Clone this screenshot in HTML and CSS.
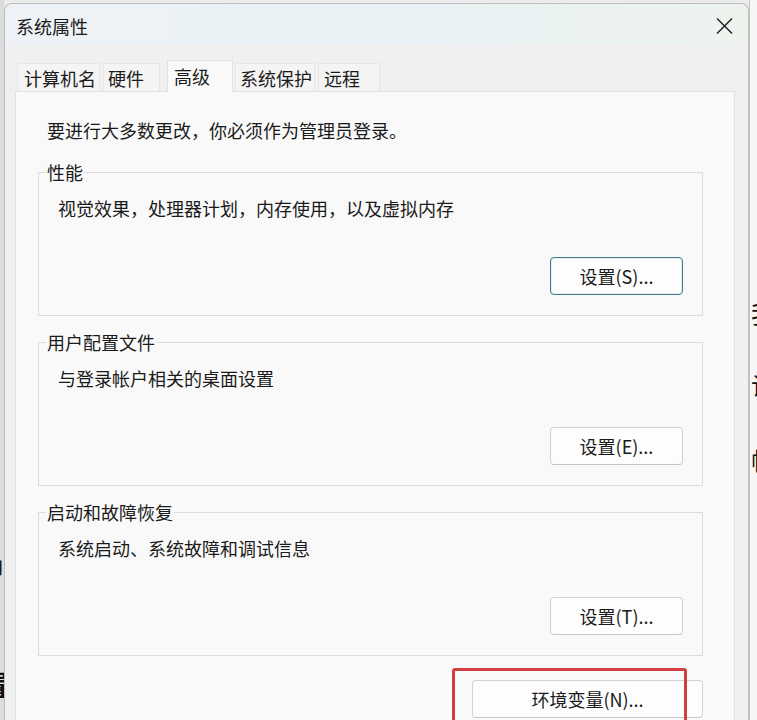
FILE: index.html
```html
<!DOCTYPE html>
<html lang="zh-CN">
<head>
<meta charset="utf-8">
<title>系统属性</title>
<link rel="stylesheet" href="styles.css">
</head>
<body>
<div class="screen">
  <div class="side side-left">
    <span class="frag frag-l1">确</span>
    <span class="frag frag-l2">置</span>
  </div>
  <div class="window">
    <div class="titlebar">
      <span class="title">系统属性</span>
      <span class="close">
        <svg width="17" height="16" viewBox="0 0 17 16"><path d="M1 0.5 L16 15.5 M16 0.5 L1 15.5" stroke="#1c1c1c" stroke-width="1.4" fill="none"/></svg>
      </span>
    </div>
    <div class="client">
      <div class="tabs">
        <div class="tab tab-w1">计算机名</div>
        <div class="tab tab-w2">硬件</div>
        <div class="tab tab-w3 tab-active">高级</div>
        <div class="tab tab-w4">系统保护</div>
        <div class="tab tab-w5">远程</div>
      </div>
      <div class="panel">
        <p class="notice">要进行大多数更改，你必须作为管理员登录。</p>
        <fieldset class="group">
          <legend>性能</legend>
          <div class="group-body">
            <p class="desc">视觉效果，处理器计划，内存使用，以及虚拟内存</p>
            <div class="actions"><button class="btn btn-default">设置(S)...</button></div>
          </div>
        </fieldset>
        <fieldset class="group group-next">
          <legend>用户配置文件</legend>
          <div class="group-body">
            <p class="desc">与登录帐户相关的桌面设置</p>
            <div class="actions"><button class="btn">设置(E)...</button></div>
          </div>
        </fieldset>
        <fieldset class="group group-next">
          <legend>启动和故障恢复</legend>
          <div class="group-body">
            <p class="desc">系统启动、系统故障和调试信息</p>
            <div class="actions"><button class="btn">设置(T)...</button></div>
          </div>
        </fieldset>
        <div class="env-row">
          <button class="btn btn-env">环境变量(N)...</button>
          <span class="highlight"></span>
        </div>
      </div>
    </div>
  </div>
  <div class="side side-right">
    <span class="frag frag-r1">我</span>
    <span class="frag frag-r2">计</span>
    <span class="frag frag-r3">帧</span>
  </div>
</div>
</body>
</html>
```

FILE: styles.css
```css
* { box-sizing: border-box; }

html, body {
  margin: 0;
  padding: 0;
  height: 720px;
  overflow: hidden;
}

body {
  font-family: "Noto Sans CJK SC", "Microsoft YaHei", sans-serif;
  color: #1a1a1a;
  background: #ececec;
}

.screen {
  display: flex;
  height: 720px;
  overflow: hidden;
}

/* background content peeking out beside the window */
.side {
  overflow: hidden;
  display: flex;
  flex-direction: column;
  font-size: 24px;
  line-height: 24px;
  color: #111;
}

.side-left {
  width: 4px;
  flex: none;
  background: #dcdcdc;
}

.side-right {
  width: 8px;
  flex: none;
  background: #f6f6f6;
  border-left: 1px solid #c4c4c4;
}

.frag { display: block; white-space: nowrap; }

.frag-l1 { margin-top: 551px; margin-left: -19px; font-size: 22px; }
.frag-l2 { margin-top: 94px; margin-left: -19px; font-weight: 700; font-size: 28px; line-height: 30px; }

.frag-r1 { margin-top: 301px; margin-left: 1px; }
.frag-r2 { margin-top: 48px; margin-left: 1px; }
.frag-r3 { margin-top: 51px; margin-left: 1px; }

/* window */
.window {
  width: 745px;
  flex: none;
  margin-top: 3px;
  background: #f0f0f0;
  border: 1px solid #bdbdbd;
  border-bottom: none;
  border-radius: 8px 8px 0 0;
  display: flex;
  flex-direction: column;
}

.titlebar {
  height: 41px;
  display: flex;
  align-items: center;
  padding: 2px 0 0 11px;
  border-radius: 8px 8px 0 0;
  background: linear-gradient(90deg, #eef2f6 0%, #e9f2f5 55%, #eef3ee 100%);
}

.title {
  font-size: 18px;
  line-height: 24px;
  color: #1a1a1a;
}

.close {
  margin-left: auto;
  margin-right: 15px;
  display: flex;
  width: 17px;
  height: 16px;
}

.client {
  padding: 15px 13px 0 10px;
  flex: 1;
  display: flex;
  flex-direction: column;
}

/* tabs */
.tabs {
  display: flex;
  align-items: flex-end;
  height: 31px;
  padding-left: 2px;
  position: relative;
  z-index: 1;
}

.tab {
  height: 28px;
  line-height: 28px;
  font-size: 18px;
  padding-left: 5px;
  background: #f4f4f4;
  border: 1px solid #e7e7e7;
  border-bottom: none;
  margin-right: 3px;
  white-space: nowrap;
}

.tab-w1 { width: 83px; padding-left: 6px; }
.tab-w2 { width: 57px; padding-left: 4px; margin-right: 7px; }
.tab-w3 { width: 66px; padding-left: 6px; margin-right: 2px; }
.tab-w4 { width: 80px; padding-left: 4px; }
.tab-w5 { width: 62px; }

.tab-active {
  height: 32px;
  line-height: 27px;
  padding-top: 2px;
  margin-bottom: -1px;
  background: #f9f9f9;
  border-color: #e1e1e1;
}

/* panel */
.panel {
  flex: 1;
  background: #f9f9f9;
  border: 1px solid #e2e2e2;
  border-bottom: none;
  padding: 26px 31px 0 22px;
}

.notice {
  margin: 0 0 18px 9px;
  font-size: 18px;
  line-height: 24px;
}

.group {
  margin: 0;
  padding: 0;
  min-width: 0;
  border: 1px solid #dcdcdc;
}

.group-next { margin-top: 14px; }

.group legend {
  margin-left: 7px;
  padding: 0 1px;
  font-size: 18px;
  line-height: 24px;
}

.group-body {
  padding: 12px 19px 20px 19px;
}

.desc {
  margin: 0;
  font-size: 18px;
  line-height: 24px;
}

.actions {
  margin-top: 37px;
  display: flex;
  justify-content: flex-end;
}

.btn {
  width: 133px;
  height: 38px;
  padding: 0;
  font-family: "Noto Sans CJK SC", "Microsoft YaHei", sans-serif;
  font-size: 18px;
  line-height: 24px;
  color: #1a1a1a;
  background: #fdfdfd;
  border: 1px solid #d2d2d2;
  border-bottom-color: #c6c6c6;
  border-radius: 4px;
}

.btn-default {
  border: 1px solid #3f7b8c;
  box-shadow: inset 0 0 0 1px #e6eff2;
}

.env-row {
  margin-top: 24px;
  display: flex;
  justify-content: flex-end;
  position: relative;
}

.btn-env {
  width: 231px;
  line-height: 24px;
}

.highlight {
  position: absolute;
  left: 414px;
  top: -12px;
  width: 235px;
  height: 90px;
  border: 3px solid #d0403f;
  border-radius: 3px;
}
```
